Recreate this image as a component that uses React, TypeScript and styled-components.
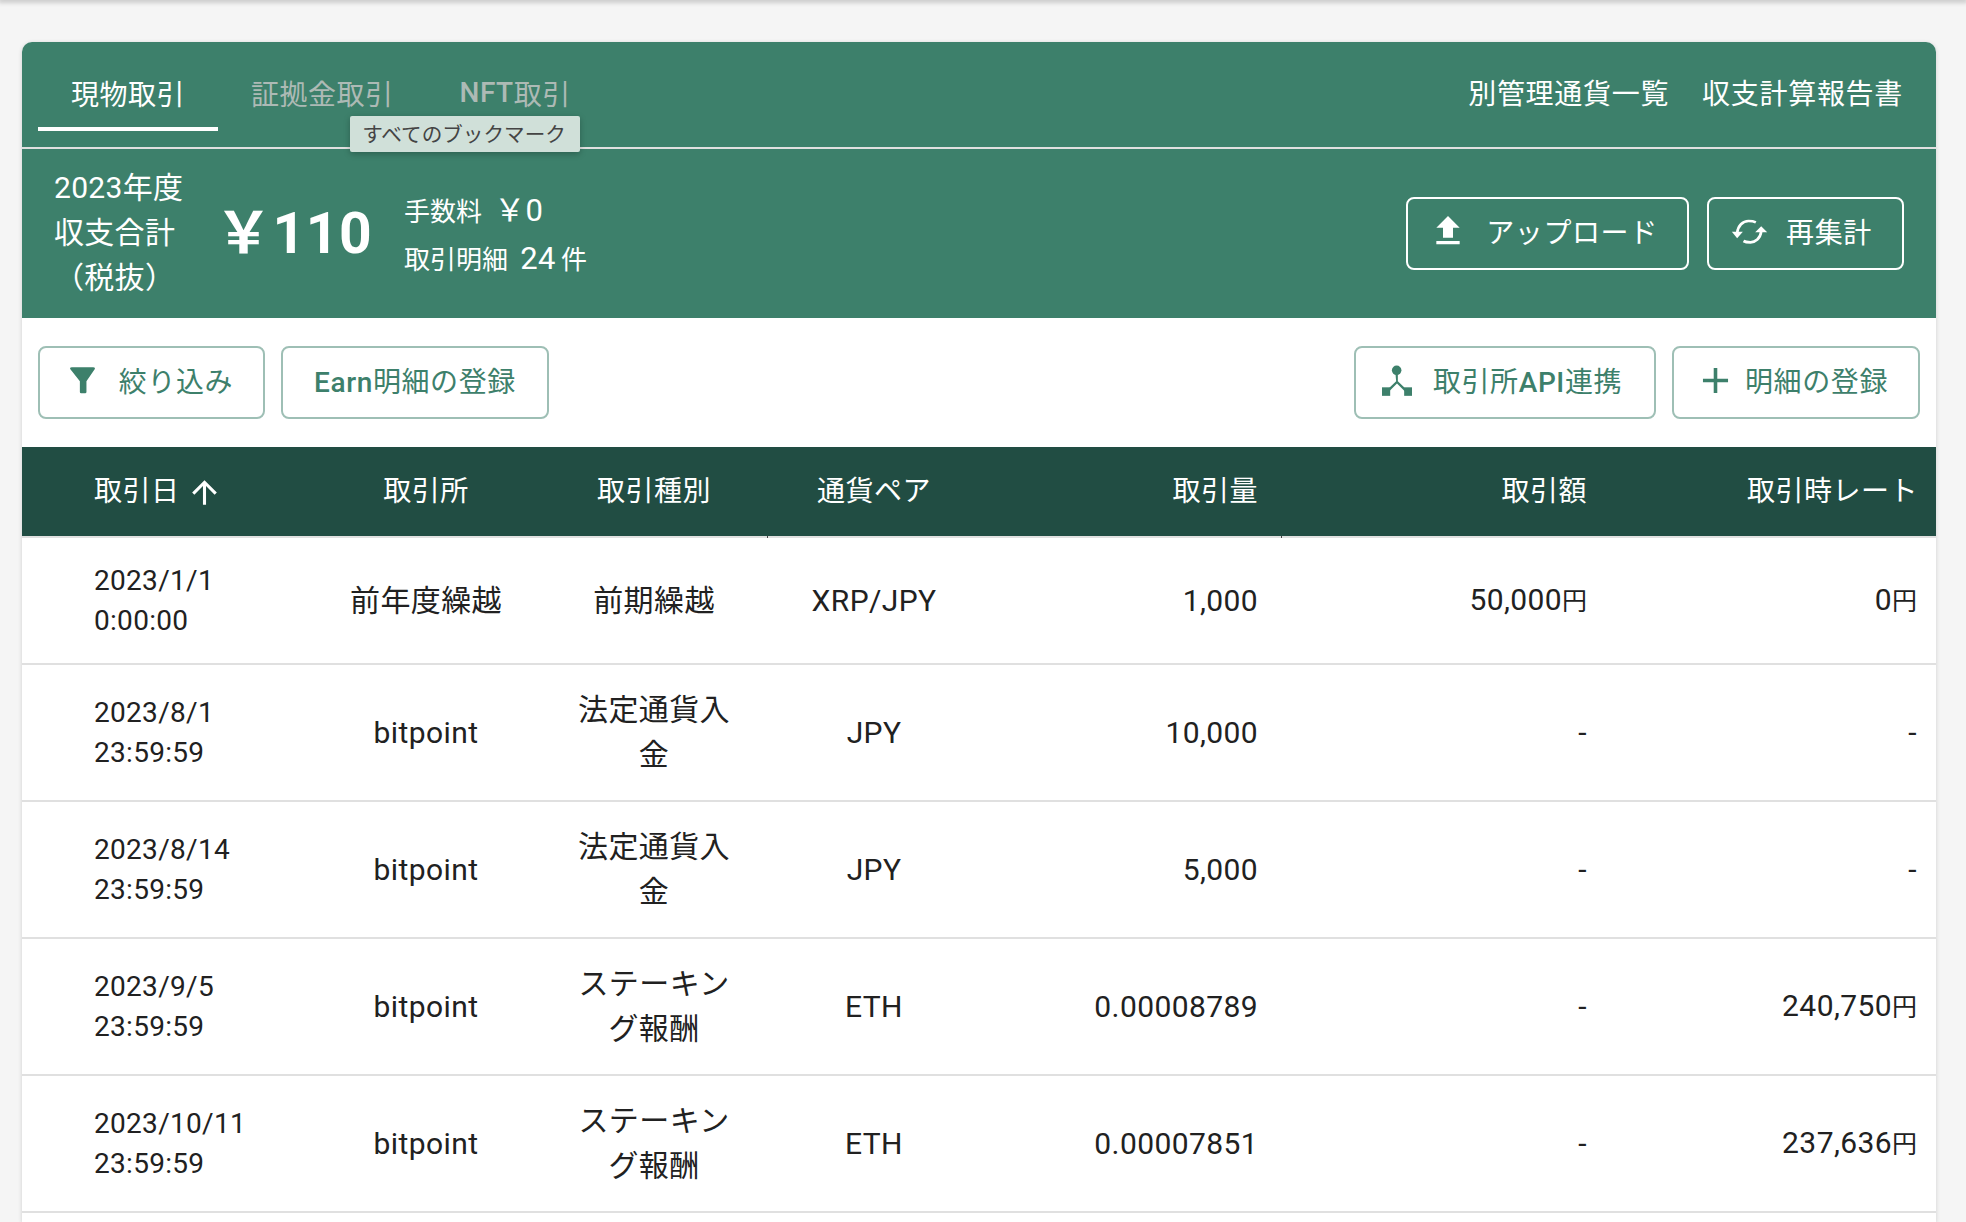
import React from 'react';
import styled, { createGlobalStyle } from 'styled-components';
import { MdAdd, MdArrowUpward, MdFileUpload } from 'react-icons/md';

const green = '#3d806b';
const dark = '#214d43';
const font = `Roboto, "Noto Sans CJK JP", sans-serif`;

const GlobalStyle = createGlobalStyle`
  html, body {
    margin: 0;
    height: 1222px;
    overflow: hidden;
    background: #f5f5f5;
  }
  body {
    font-family: ${font};
    color: #212121;
  }
`;

const TopShadow = styled.div`
  height: 0;
  box-shadow: 0 0 5px 2px rgba(0, 0, 0, 0.25);
`;

const Page = styled.main`
  padding: 42px 30px 0 22px;
`;

const Card = styled.section`
  background: #fff;
  border-radius: 10px 10px 0 0;
  box-shadow: 0 1px 4px rgba(0, 0, 0, 0.16);
  min-height: 1180px;
`;

const Banner = styled.header`
  background: ${green};
  color: #fff;
  border-radius: 10px 10px 0 0;
`;

const TabBar = styled.nav`
  display: flex;
  justify-content: space-between;
  align-items: stretch;
  height: 105px;
  padding: 0 33px 0 16px;
  border-bottom: 2px solid #e0e0e0;
  position: relative;
`;

const Tabs = styled.div`
  display: flex;
  align-items: flex-start;
`;

const Tab = styled.a<{ $active?: boolean }>`
  display: flex;
  align-items: center;
  box-sizing: border-box;
  height: 89px;
  padding: 16px 33px 0;
  font-size: 28px;
  letter-spacing: 0.5px;
  color: ${({ $active }) => ($active ? '#fff' : '#adbab5')};
  border-bottom: 4px solid ${({ $active }) => ($active ? '#fff' : 'transparent')};
`;

const Medium = styled.span`
  font-weight: 500;
`;

const Tooltip = styled.div`
  position: absolute;
  left: 328px;
  top: 74px;
  width: 230px;
  height: 36px;
  box-sizing: border-box;
  padding: 0 2px 2px 0;
  display: flex;
  align-items: center;
  justify-content: center;
  background: #d0e0d9;
  color: #444;
  font-size: 20.6px;
  border-radius: 2px;
  box-shadow: 0 2px 6px rgba(0, 0, 0, 0.25);
`;

const LinkGroup = styled.div`
  display: flex;
  gap: 33px;
  align-items: flex-start;
  padding-top: 33px;
  font-size: 28px;
  letter-spacing: 0.7px;
  line-height: 40px;
`;

const Summary = styled.div`
  display: flex;
  align-items: center;
  justify-content: space-between;
  height: 169px;
  padding: 0 32px 0 32px;
`;

const SummaryLeft = styled.div`
  display: flex;
  align-items: center;
`;

const YearLabel = styled.div`
  width: 130px;
  margin-top: -2px;
  font-size: 30px;
  line-height: 45px;
  letter-spacing: 0.3px;
`;

const Total = styled.div`
  margin: -12px 0 0 31px;
  font-size: 57px;
  font-weight: 700;
  letter-spacing: 0.5px;
`;

const Details = styled.div`
  margin: 3px 0 0 32px;
  display: flex;
  flex-direction: column;
  gap: 7px;
  font-size: 26px;
  line-height: 40px;
`;

const DetailRow = styled.div`
  display: flex;
  align-items: baseline;
`;

const DetailValue = styled.span`
  margin: 0 5px 0 12px;
  font-size: 31px;
  letter-spacing: 0.5px;
`;

const Button = styled.button<{ $light?: boolean; $width: number; $gap?: number; $shift?: number }>`
  display: flex;
  align-items: center;
  justify-content: center;
  gap: ${({ $gap }) => $gap ?? 18}px;
  width: ${({ $width }) => $width}px;
  height: 73px;
  padding: 0 ${({ $shift }) => $shift ?? 0}px 5px 0;
  background: transparent;
  border: 2px solid ${({ $light }) => ($light ? '#fff' : '#9ebfb5')};
  border-radius: 8px;
  color: ${({ $light }) => ($light ? '#fff' : green)};
  font-family: ${font};
  font-size: 28px;
  letter-spacing: 0.6px;
  svg {
    flex: none;
  }
`;

const ButtonRow = styled.div<{ $gap: number }>`
  display: flex;
  gap: ${({ $gap }) => $gap}px;
`;

const Actions = styled.div`
  display: flex;
  align-items: center;
  justify-content: space-between;
  height: 129px;
  padding: 0 16px;
`;

const Table = styled.table`
  width: 100%;
  border-collapse: collapse;
  table-layout: fixed;
`;

const HeadRow = styled.tr`
  background: ${dark};
  color: #fff;
  height: 90px;
  border-bottom: 2px solid #e0e0e0;
`;

const HeadCell = styled.th<{ $align: string; $pad?: string; $tick?: boolean }>`
  position: relative;
  padding: ${({ $pad }) => $pad ?? '0 23px 5px'};
  font-size: 28px;
  font-weight: 400;
  letter-spacing: 0.5px;
  text-align: ${({ $align }) => $align};
  &::after {
    content: '';
    display: ${({ $tick }) => ($tick ? 'block' : 'none')};
    position: absolute;
    right: -1px;
    bottom: -2px;
    width: 1px;
    height: 2px;
    background: #444;
  }
`;

const SortLabel = styled.span`
  display: inline-flex;
  align-items: center;
  gap: 6px;
  svg {
    margin-top: 6px;
  }
`;

const Row = styled.tr`
  border-bottom: 2px solid #e0e0e0;
`;

const Cell = styled.td<{ $align: string; $pad?: string; $right?: string }>`
  padding: 22px 0 23px;
  padding-left: ${({ $pad }) => $pad ?? '23px'};
  padding-right: ${({ $pad, $right }) => $right ?? $pad ?? '23px'};
  font-size: 30px;
  line-height: 45px;
  letter-spacing: 0.4px;
  text-align: ${({ $align }) => $align};
  vertical-align: middle;
`;

const DateCell = styled.td`
  padding: 22.5px 0 22.5px 72px;
  font-size: 28px;
  line-height: 40px;
  letter-spacing: 0.3px;
`;

const Yen = styled.span`
  font-size: 25px;
  letter-spacing: 0;
`;

const SyncIcon = () => (
  <svg width="37" height="25" viewBox="20 30 110 75" aria-hidden="true">
    <path d="M38 72C40 50 55 36 72 36C80 36 88 37 94 40" fill="none" stroke="#fff" strokeWidth="8" />
    <path d="M22 68H55L38 88Z" fill="#fff" />
    <path d="M110 68C108 88 92 100 78 100C70 100 62 99 57 96" fill="none" stroke="#fff" strokeWidth="8" />
    <path d="M92 70H128L110 52Z" fill="#fff" />
  </svg>
);

const FunnelIcon = () => (
  <svg width="25" height="27" viewBox="42 26 76 80" fill={green} aria-hidden="true">
    <path d="M42 30Q42 26 48 26H112Q118 26 118 30L92 68V101Q92 105 88 105H76Q72 105 72 101V68Z" />
  </svg>
);

const NodesIcon = () => (
  <svg width="30" height="31" viewBox="22 20 88 90" fill={green} aria-hidden="true">
    <circle cx="65" cy="35" r="14" />
    <path d="M61.5 45h7v22l26 25-5 5-23.5-23-23.5 23-5-5 26-25z" />
    <rect x="22" y="85" width="24" height="25" />
    <rect x="87" y="85" width="23" height="25" />
  </svg>
);

interface Trade {
  date: string;
  time: string;
  exchange: string;
  kind: string;
  pair: string;
  volume: string;
  amount: string;
  rate: string;
}

const trades: Trade[] = [
  { date: '2023/1/1', time: '0:00:00', exchange: '前年度繰越', kind: '前期繰越', pair: 'XRP/JPY', volume: '1,000', amount: '50,000', rate: '0' },
  { date: '2023/8/1', time: '23:59:59', exchange: 'bitpoint', kind: '法定通貨入金', pair: 'JPY', volume: '10,000', amount: '-', rate: '-' },
  { date: '2023/8/14', time: '23:59:59', exchange: 'bitpoint', kind: '法定通貨入金', pair: 'JPY', volume: '5,000', amount: '-', rate: '-' },
  { date: '2023/9/5', time: '23:59:59', exchange: 'bitpoint', kind: 'ステーキング報酬', pair: 'ETH', volume: '0.00008789', amount: '-', rate: '240,750' },
  { date: '2023/10/11', time: '23:59:59', exchange: 'bitpoint', kind: 'ステーキング報酬', pair: 'ETH', volume: '0.00007851', amount: '-', rate: '237,636' },
];

const Money = ({ value }: { value: string }) =>
  value === '-' ? (
    <>-</>
  ) : (
    <>
      {value}
      <Yen>円</Yen>
    </>
  );

export default function App() {
  return (
    <>
      <GlobalStyle />
      <TopShadow />
      <Page>
        <Card>
          <Banner>
            <TabBar>
              <Tabs>
                <Tab $active>現物取引</Tab>
                <Tab>証拠金取引</Tab>
                <Tab>
                  <Medium>NFT</Medium>取引
                </Tab>
              </Tabs>
              <LinkGroup>
                <span>別管理通貨一覧</span>
                <span>収支計算報告書</span>
              </LinkGroup>
              <Tooltip>すべてのブックマーク</Tooltip>
            </TabBar>
            <Summary>
              <SummaryLeft>
                <YearLabel>
                  2023年度
                  <br />
                  収支合計
                  <br />
                  （税抜）
                </YearLabel>
                <Total>￥110</Total>
                <Details>
                  <DetailRow>
                    手数料<DetailValue>￥0</DetailValue>
                  </DetailRow>
                  <DetailRow>
                    取引明細<DetailValue>24</DetailValue>件
                  </DetailRow>
                </Details>
              </SummaryLeft>
              <ButtonRow $gap={18}>
                <Button $light $width={283} $shift={9}>
                  <MdFileUpload size={40} />
                  アップロード
                </Button>
                <Button $light $width={197} $shift={8}>
                  <SyncIcon />
                  再集計
                </Button>
              </ButtonRow>
            </Summary>
          </Banner>
          <Actions>
            <ButtonRow $gap={16}>
              <Button $width={227} $gap={24}>
                <FunnelIcon />
                絞り込み
              </Button>
              <Button $width={268}>
                <span>
                  <Medium>Earn</Medium>明細の登録
                </span>
              </Button>
            </ButtonRow>
            <ButtonRow $gap={16}>
              <Button $width={302} $gap={21} $shift={6}>
                <NodesIcon />
                <span>
                  取引所<Medium>API</Medium>連携
                </span>
              </Button>
              <Button $width={248} $gap={8} $shift={10}>
                <MdAdd size={43} />
                明細の登録
              </Button>
            </ButtonRow>
          </Actions>
          <Table>
            <colgroup>
              <col width="289" />
              <col width="230" />
              <col width="226" />
              <col width="214" />
              <col width="300" />
              <col width="329" />
              <col width="326" />
            </colgroup>
            <thead>
              <HeadRow>
                <HeadCell $align="left" $pad="0 0 5px 72px">
                  <SortLabel>
                    取引日
                    <MdArrowUpward size={37} />
                  </SortLabel>
                </HeadCell>
                <HeadCell $align="center">取引所</HeadCell>
                <HeadCell $align="center" $tick>
                  取引種別
                </HeadCell>
                <HeadCell $align="center">通貨ペア</HeadCell>
                <HeadCell $align="right" $tick>
                  取引量
                </HeadCell>
                <HeadCell $align="right">取引額</HeadCell>
                <HeadCell $align="right" $pad="0 18px 5px 0">
                  取引時レート
                </HeadCell>
              </HeadRow>
            </thead>
            <tbody>
              {trades.map((t) => (
                <Row key={t.date}>
                  <DateCell>
                    {t.date}
                    <br />
                    {t.time}
                  </DateCell>
                  <Cell $align="center">{t.exchange}</Cell>
                  <Cell $align="center" $pad="30px">
                    {t.kind}
                  </Cell>
                  <Cell $align="center">{t.pair}</Cell>
                  <Cell $align="right">{t.volume}</Cell>
                  <Cell $align="right">
                    <Money value={t.amount} />
                  </Cell>
                  <Cell $align="right" $right="19px">
                    <Money value={t.rate} />
                  </Cell>
                </Row>
              ))}
            </tbody>
          </Table>
        </Card>
      </Page>
    </>
  );
}
